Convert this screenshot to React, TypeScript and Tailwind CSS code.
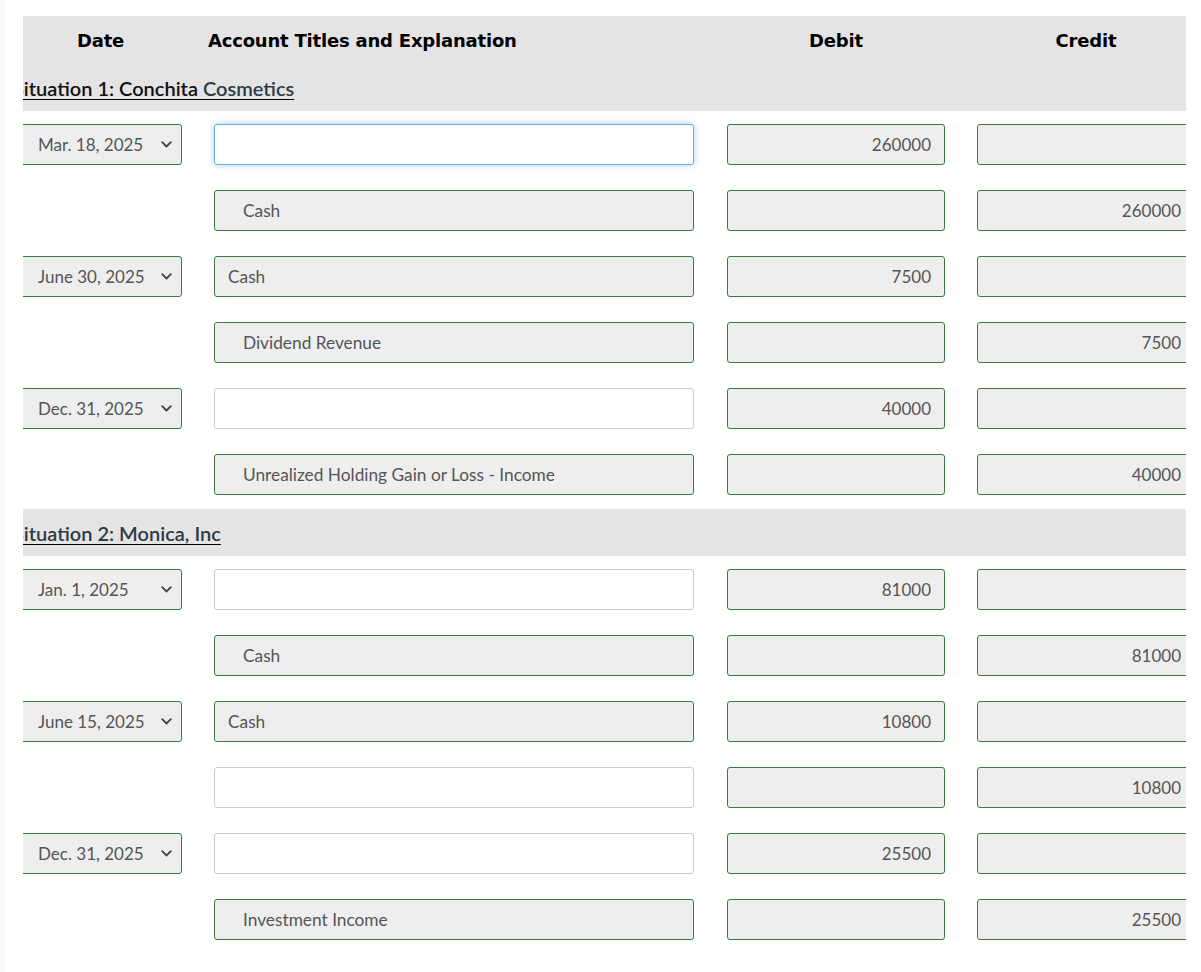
import React from "react";

type Row = {
  date?: string;
  account: string;
  indent?: boolean;
  focused?: boolean;
  debit: string;
  credit: string;
};

type Section = {
  title: React.ReactNode;
  rows: Row[];
};

const sections: Section[] = [
  {
    title: (
      <>
        <span className="text-[#111]">Situation 1: Conchita</span>{" "}
        <span className="text-[#2d3b45]">Cosmetics</span>
      </>
    ),
    rows: [
      { date: "Mar. 18, 2025", account: "", focused: true, debit: "260000", credit: "" },
      { account: "Cash", indent: true, debit: "", credit: "260000" },
      { date: "June 30, 2025", account: "Cash", debit: "7500", credit: "" },
      { account: "Dividend Revenue", indent: true, debit: "", credit: "7500" },
      { date: "Dec. 31, 2025", account: "", debit: "40000", credit: "" },
      { account: "Unrealized Holding Gain or Loss - Income", indent: true, debit: "", credit: "40000" },
    ],
  },
  {
    title: <span className="text-[#2d3b45]">Situation 2: Monica, Inc</span>,
    rows: [
      { date: "Jan. 1, 2025", account: "", debit: "81000", credit: "" },
      { account: "Cash", indent: true, debit: "", credit: "81000" },
      { date: "June 15, 2025", account: "Cash", debit: "10800", credit: "" },
      { account: "", indent: true, debit: "", credit: "10800" },
      { date: "Dec. 31, 2025", account: "", debit: "25500", credit: "" },
      { account: "Investment Income", indent: true, debit: "", credit: "25500" },
    ],
  },
];

const filled = "bg-[#eeeeee] border border-[#3d7a3d]";
const blank = "bg-white border border-[#cccccc]";

function DateSelect({ value }: { value: string }) {
  return (
    <div className={`ml-[6px] w-[163px] h-[41px] rounded-[3px] ${filled} flex items-center justify-between pl-[18px] pr-[9px] text-[17px] text-[#555]`}>
      <span>{value}</span>
      <svg width="11" height="7" viewBox="0 0 11 7" fill="none">
        <path d="M1.2 1.2 5.5 5.5 9.8 1.2" stroke="#444" strokeWidth="1.8" strokeLinecap="round" strokeLinejoin="round" />
      </svg>
    </div>
  );
}

function Field({ value, className }: { value: string; className: string }) {
  return (
    <input
      readOnly
      value={value}
      className={`h-[41px] rounded-[3px] text-[#555] outline-none ${className}`}
    />
  );
}

function EntryRow({ row }: { row: Row }) {
  const accountStyle = row.focused
    ? "bg-white border border-[#66afe9] shadow-[0_0_6px_rgba(102,175,233,0.6)]"
    : row.account
    ? filled
    : blank;
  return (
    <div className="h-[66px] flex items-start pt-[13px]">
      <div className="w-[169px] shrink-0">{row.date && <DateSelect value={row.date} />}</div>
      <div className="ml-[32px] w-[480px] shrink-0">
        <Field
          value={row.account}
          className={`w-full text-[17.3px] ${row.indent ? "pl-[28px]" : "pl-[13px]"} ${accountStyle}`}
        />
      </div>
      <div className="ml-[33px] w-[218px] shrink-0">
        <Field value={row.debit} className={`w-full text-[17px] text-right pr-[13px] ${filled}`} />
      </div>
      <div className="ml-[32px] w-[218px] shrink-0">
        <Field value={row.credit} className={`w-full text-[17px] text-right pr-[13px] ${filled}`} />
      </div>
    </div>
  );
}

export default function App() {
  return (
    <div className="min-h-screen bg-white border-l-[5px] border-[#fafafa] pt-4" style={{ fontFamily: "Lato, 'Open Sans', sans-serif" }}>
      <div className="ml-[18px] w-[1163px] overflow-hidden">
        <div className="-ml-[10px] w-[1200px]">
          {/* header */}
          <div className="bg-[#e4e4e4] h-[48px] flex items-center text-[18px] font-bold text-black tracking-[-0.2px]" style={{ fontFamily: "'DejaVu Sans', sans-serif" }}>
            <div className="w-[169px] shrink-0 pl-[6px] text-center">Date</div>
            <div className="ml-[26px] w-[486px] shrink-0">Account Titles and Explanation</div>
            <div className="ml-[33px] w-[218px] shrink-0 text-center">Debit</div>
            <div className="ml-[32px] w-[218px] shrink-0 text-center">Credit</div>
          </div>
          {sections.map((section, i) => (
            <div key={i}>
              <div className={`bg-[#e4e4e4] h-[47px] flex items-center ${i > 0 ? "mt-[2px]" : ""}`}>
                <span className="text-[20px] font-semibold underline underline-offset-[3px] decoration-1">{section.title}</span>
              </div>
              {section.rows.map((row, j) => (
                <EntryRow key={j} row={row} />
              ))}
            </div>
          ))}
        </div>
      </div>
    </div>
  );
}
